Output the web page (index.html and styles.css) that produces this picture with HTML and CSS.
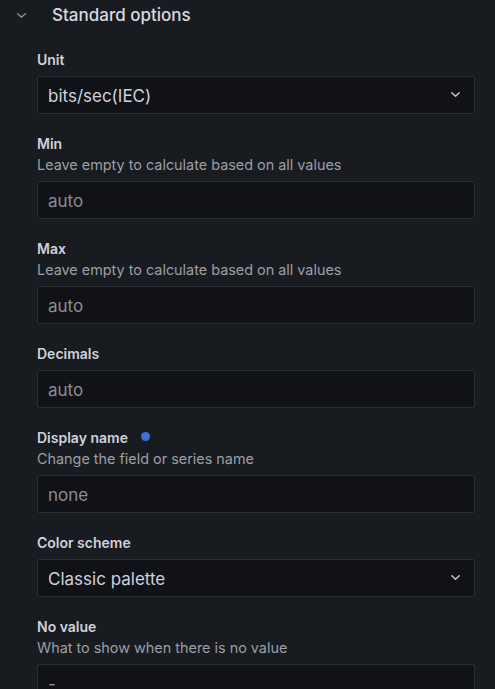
FILE: index.html
```html
<!DOCTYPE html>
<html lang="en">
<head>
<meta charset="utf-8">
<title>Standard options</title>
<link rel="stylesheet" href="styles.css">
</head>
<body>
<div class="pane">
  <div class="header">
    <svg class="caret" width="9" height="5" viewBox="0 0 9 5"><polyline points="0.7,0.7 4.5,4.3 8.3,0.7" fill="none" stroke="#8e8e96" stroke-width="1.3" stroke-linecap="round" stroke-linejoin="round"/></svg>
    <span class="title">Standard options</span>
  </div>
  <div class="fields">
    <div class="field">
      <div class="label">Unit</div>
      <div class="input select"><span class="value">bits/sec(IEC)</span><svg class="chev" width="9" height="5" viewBox="0 0 9 5"><polyline points="0.8,0.8 4.5,4.2 8.2,0.8" fill="none" stroke="#c4c5d0" stroke-width="1.5" stroke-linecap="round" stroke-linejoin="round"/></svg></div>
    </div>
    <div class="field">
      <div class="label">Min</div>
      <div class="desc">Leave empty to calculate based on all values</div>
      <div class="input"><span class="placeholder">auto</span></div>
    </div>
    <div class="field">
      <div class="label">Max</div>
      <div class="desc">Leave empty to calculate based on all values</div>
      <div class="input"><span class="placeholder">auto</span></div>
    </div>
    <div class="field">
      <div class="label">Decimals</div>
      <div class="input"><span class="placeholder">auto</span></div>
    </div>
    <div class="field">
      <div class="label">Display name <span class="dot"></span></div>
      <div class="desc">Change the field or series name</div>
      <div class="input"><span class="placeholder">none</span></div>
    </div>
    <div class="field">
      <div class="label">Color scheme</div>
      <div class="input select"><span class="value">Classic palette</span><svg class="chev" width="9" height="5" viewBox="0 0 9 5"><polyline points="0.8,0.8 4.5,4.2 8.2,0.8" fill="none" stroke="#c4c5d0" stroke-width="1.5" stroke-linecap="round" stroke-linejoin="round"/></svg></div>
    </div>
    <div class="field">
      <div class="label">No value</div>
      <div class="desc">What to show when there is no value</div>
      <div class="input"><span class="placeholder">-</span></div>
    </div>
  </div>
</div>
</body>
</html>
```
FILE: styles.css
```css
html, body {
  margin: 0;
  padding: 0;
  background: #181b1f;
  height: 100%;
  overflow: hidden;
}

body {
  font-family: Inter, Roboto, "Liberation Sans", sans-serif;
  color: #ccccdc;
}

.header {
  display: flex;
  align-items: center;
  gap: 26px;
  padding: 2px 0 0 17px;
  height: 26px;
  margin-bottom: 22px;
}

.caret {
  display: block;
  flex: none;
}

.title {
  font-size: 17px;
  line-height: 26px;
  font-weight: 500;
  color: #d8d9e0;
}

.fields {
  padding: 0 20px 0 37px;
}

.field {
  margin-bottom: 20px;
}

.label {
  font-size: 14px;
  line-height: 20px;
  font-weight: 600;
  color: #d0d1dc;
  display: flex;
  align-items: center;
}

.dot {
  display: inline-block;
  width: 9px;
  height: 9px;
  border-radius: 50%;
  background: #3d71d9;
  margin-left: 13px;
  margin-top: -3px;
}

.desc {
  font-size: 14.4px;
  line-height: 21px;
  color: #9d9ea7;
}

.input {
  margin-top: 6px;
  height: 38px;
  box-sizing: border-box;
  border: 1px solid #2b2e34;
  border-radius: 2px;
  background: #111217;
  padding: 2px 14px 0 10px;
  display: flex;
  align-items: center;
  font-size: 17px;
}

.value {
  flex: 1;
  color: #d0d1dc;
}

.placeholder {
  color: #8b8c94;
}

.chev {
  display: block;
  flex: none;
  margin-top: -3px;
}
```
